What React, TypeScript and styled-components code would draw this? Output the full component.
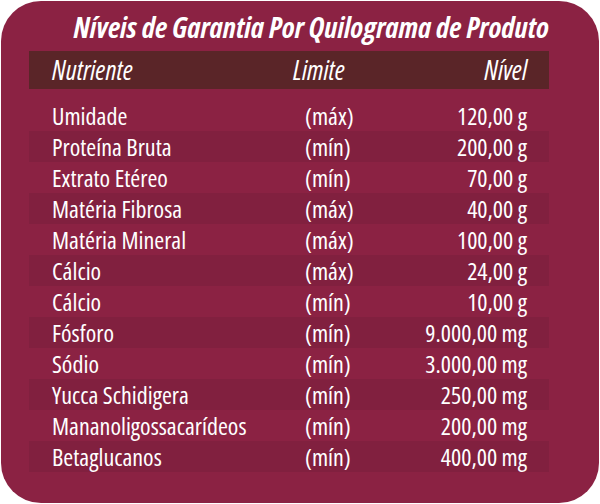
import React from "react";
import styled, { createGlobalStyle } from "styled-components";

const GlobalStyle = createGlobalStyle`
  html, body {
    margin: 0;
    padding: 0;
    background: #ffffff;
  }
  body {
    font-family: "Open Sans", "Noto Sans", sans-serif;
    font-stretch: condensed;
  }
`;

const Card = styled.div`
  box-sizing: border-box;
  width: 598px;
  height: 502px;
  margin: 1px 0 0 1px;
  background: #8b2243;
  border-radius: 40px;
  padding: 10px 50px 0 28px;
  display: flex;
  flex-direction: column;
`;

const Title = styled.h1`
  margin: 0;
  height: 40px;
  text-align: right;
  color: #ffffff;
  font-size: 29px;
  font-weight: 700;
  font-style: italic;
  line-height: 32px;
  white-space: nowrap;
`;

const HeaderBar = styled.div`
  display: grid;
  grid-template-columns: 241px 1fr auto;
  align-items: center;
  height: 38px;
  padding: 0 22px 0 23px;
  background: #5a2528;
  color: #ffffff;
  font-size: 27px;
  font-style: italic;
  line-height: 30px;
`;

const Rows = styled.div`
  display: flex;
  flex-direction: column;
  margin-top: 11px;
`;

const Row = styled.div<{ shaded?: boolean }>`
  display: grid;
  grid-template-columns: 253px 1fr auto;
  align-items: center;
  height: 31px;
  padding: 0 22px 0 23px;
  background: ${(props) => (props.shaded ? "#81203f" : "transparent")};
  color: #ffffff;
  font-size: 24px;
  line-height: 30px;
  white-space: nowrap;
`;

const ValueCell = styled.span`
  text-align: right;
`;

const nutrients: Array<[string, string, string]> = [
  ["Umidade", "(máx)", "120,00 g"],
  ["Proteína Bruta", "(mín)", "200,00 g"],
  ["Extrato Etéreo", "(mín)", "70,00 g"],
  ["Matéria Fibrosa", "(máx)", "40,00 g"],
  ["Matéria Mineral", "(máx)", "100,00 g"],
  ["Cálcio", "(máx)", "24,00 g"],
  ["Cálcio", "(mín)", "10,00 g"],
  ["Fósforo", "(mín)", "9.000,00 mg"],
  ["Sódio", "(mín)", "3.000,00 mg"],
  ["Yucca Schidigera", "(mín)", "250,00 mg"],
  ["Mananoligossacarídeos", "(mín)", "200,00 mg"],
  ["Betaglucanos", "(mín)", "400,00 mg"],
];

const App = () => {
  return (
    <>
      <GlobalStyle />
      <Card>
        <Title>Níveis de Garantia Por Quilograma de Produto</Title>
        <HeaderBar>
          <span>Nutriente</span>
          <span>Limite</span>
          <ValueCell>Nível</ValueCell>
        </HeaderBar>
        <Rows>
          {nutrients.map(([name, limit, value], index) => (
            <Row key={index} shaded={index % 2 === 1}>
              <span>{name}</span>
              <span>{limit}</span>
              <ValueCell>{value}</ValueCell>
            </Row>
          ))}
        </Rows>
      </Card>
    </>
  );
};

export default App;
